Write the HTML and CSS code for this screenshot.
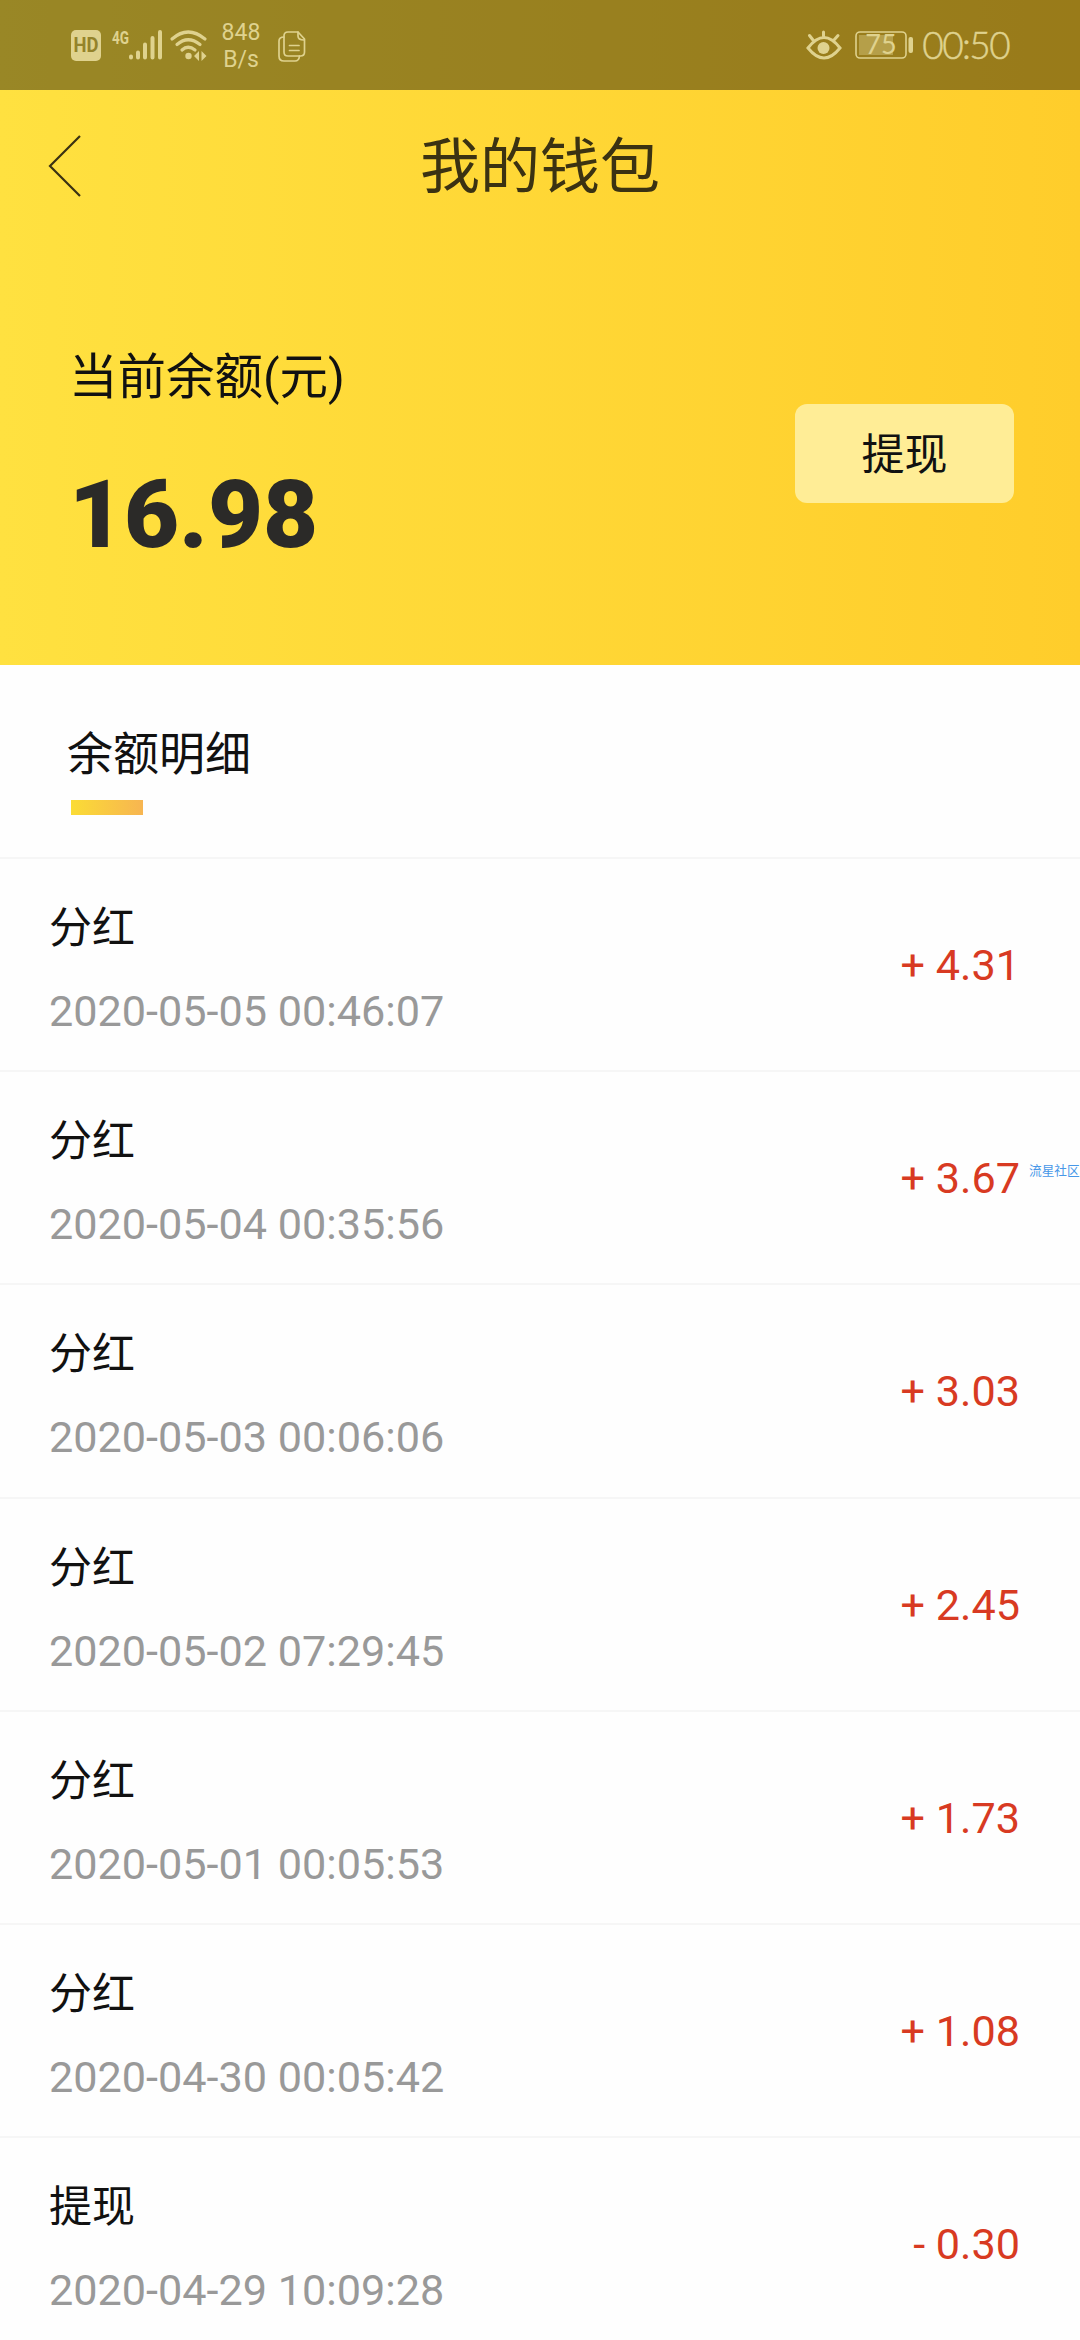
FILE: index.html
```
<!DOCTYPE html>
<html lang="zh-CN">
<head>
<meta charset="utf-8">
<title>我的钱包</title>
<link rel="stylesheet" href="styles.css">
</head>
<body>
<div class="screen">
  <header class="hero">
    <div class="status">
      <svg class="hd" width="30" height="31" viewBox="0 0 30 31"><rect width="30" height="31" rx="5" fill="currentColor"/><text x="15" y="22" text-anchor="middle" class="hd-text" textLength="25" lengthAdjust="spacingAndGlyphs">HD</text></svg>
      <svg class="signal" width="51" height="32" viewBox="0 0 51 32" fill="none" stroke="currentColor" stroke-width="4" stroke-linecap="round"><text x="0" y="14.500" class="net-text" textLength="17" lengthAdjust="spacingAndGlyphs">4G</text><path d="M19 27.500v1M26 23.500v5M33 15.500v13M40.500 9v19.500M48 3v25.500"/></svg>
      <svg class="wifi" width="38" height="32" viewBox="0 0 38 32" fill="none" stroke="currentColor" stroke-width="3.200" stroke-linecap="round"><path d="M2 10Q18-4 35 10M7 15.500Q18 6 30 15.500M12 21Q18 15.500 25 21"/><circle cx="18.500" cy="27" r="3.200" fill="currentColor" stroke="none"/><path d="M29 22v10l-5-5zM31.500 22v10l5-5z" fill="currentColor" stroke="none"/></svg>
      <div class="speed"><span>848</span><span>B/s</span></div>
      <svg class="docs" width="28" height="31" viewBox="0 0 28 31" fill="none" stroke="currentColor" stroke-width="1.700" stroke-linejoin="round" stroke-linecap="round"><path d="M10 1h10l6.500 7v13q0 4-4 4H10q-4 0-4-4V5q0-4 4-4z"/><path d="M20 1v4q0 4 6 4M6 6Q1 6 1 10v15q0 5 5 5h11q4 0 4.500-5M11.500 14.500H21M11.500 19.500H21"/></svg>
      <div class="status-right">
        <svg width="36" height="30" viewBox="0 0 36 30" fill="none" stroke="currentColor" stroke-width="3" stroke-linecap="round"><path d="M2 18Q18-3 34 18Q18 38 2 18zM17.500 6V2M7 10L3.500 5.500M28 10l4-4.500"/><circle cx="17.500" cy="18" r="6" fill="currentColor" stroke="none"/></svg>
        <svg class="battery" width="58" height="28" viewBox="0 0 58 28"><rect x="1" y="1" width="50" height="26" rx="4" fill="none" stroke="currentColor" stroke-width="1.600"/><rect x="4" y="4" width="34" height="20" fill="currentColor" opacity=".4"/><rect x="53.500" y="6" width="4.500" height="16" rx="2" fill="currentColor"/><text x="26" y="23" text-anchor="middle" class="bat-text">75</text></svg>
        <span class="time">00:50</span>
      </div>
    </div>
    <div class="nav">
      <svg class="back" width="33" height="62" viewBox="0 0 33 62" fill="none" stroke="currentColor" stroke-width="2.200"><path d="M32 1L2 31l30 30"/></svg>
      <h1 class="title">我的钱包</h1>
    </div>
    <div class="balance">
      <div>
        <div class="label">当前余额(元)</div>
        <div class="amount">16.98</div>
      </div>
      <button class="withdraw">提现</button>
    </div>
  </header>
  <div class="tab"><span class="tab-text">余额明细</span><i class="tab-line"></i></div>
  <main class="list">
    <div class="row"><div><div class="name">分红</div><div class="date">2020-05-05 00:46:07</div></div><div class="value">+ 4.31</div></div>
    <div class="row"><div><div class="name">分红</div><div class="date">2020-05-04 00:35:56</div></div><div class="value">+ 3.67</div><span class="mark">流星社区</span></div>
    <div class="row"><div><div class="name">分红</div><div class="date">2020-05-03 00:06:06</div></div><div class="value">+ 3.03</div></div>
    <div class="row"><div><div class="name">分红</div><div class="date">2020-05-02 07:29:45</div></div><div class="value">+ 2.45</div></div>
    <div class="row"><div><div class="name">分红</div><div class="date">2020-05-01 00:05:53</div></div><div class="value">+ 1.73</div></div>
    <div class="row"><div><div class="name">分红</div><div class="date">2020-04-30 00:05:42</div></div><div class="value">+ 1.08</div></div>
    <div class="row"><div><div class="name">提现</div><div class="date">2020-04-29 10:09:28</div></div><div class="value">- 0.30</div></div>
  </main>
</div>
</body>
</html>
```
FILE: styles.css
```
* { box-sizing: border-box; }
body { margin: 0; background: #fefefe; font-family: Roboto, "Noto Sans CJK SC", sans-serif; }
svg { overflow: visible; }
.screen { width: 1080px; height: 2340px; overflow: hidden; }
.hero { height: 665px; background: linear-gradient(90deg, #ffe140, #ffcd2b); }
.status { height: 90px; padding: 0 71px; display: flex; align-items: center; background: rgba(0, 0, 0, .4); color: #dfd28e; }
.hd-text { font: 700 20px Roboto, sans-serif; fill: #94832a; }
.net-text { font: 700 19px Roboto, sans-serif; fill: currentColor; stroke: none; }
.signal { margin-left: 11px; }
.wifi { margin-left: 7px; }
.speed { margin-left: 13px; padding-top: 2px; width: 40px; text-align: center; font-size: 23px; line-height: 27px; display: flex; flex-direction: column; }
.docs { margin-left: 17px; margin-top: 2px; }
.status-right { margin-left: auto; display: flex; align-items: center; }
.battery { margin-left: 13px; }
.bat-text { font: 27px Lato, sans-serif; fill: currentColor; }
.time { margin-left: 9px; font: 300 37px/40px Lato, sans-serif; letter-spacing: -1.6px; -webkit-text-stroke: .5px currentColor; }
.nav { height: 152px; padding-left: 48px; display: flex; align-items: center; color: #3b3212; }
.title { flex: 1; margin: 3px 81px 0 0; text-align: center; font-size: 60px; line-height: 80px; font-weight: 400; }
.balance { padding: 101px 66px 0 69px; display: flex; justify-content: space-between; align-items: flex-start; }
.label { font-size: 48.5px; line-height: 70px; color: #111; }
.amount { margin-top: 47px; font-size: 95px; line-height: 110px; font-weight: 900; color: #2b2a28; }
.withdraw { margin-top: 61px; width: 219px; height: 99px; border: 0; border-radius: 12px; background: #ffed96; font: 43px/90px "Noto Sans CJK SC", sans-serif; padding: 0 0 6px; color: #111; }
.tab { height: 194px; padding: 55px 0 0 67px; border-bottom: 2px solid #f6f6f6; display: flex; flex-direction: column; align-items: flex-start; }
.tab-text { font-size: 46px; line-height: 68px; color: #111; }
.tab-line { margin: 12px 0 0 4px; width: 72px; height: 15px; background: linear-gradient(90deg, #fbdc35, #f7b551); }
.row { position: relative; height: 213.2px; padding: 37px 60px 0 49px; display: flex; justify-content: space-between; border-bottom: 2px solid #f6f6f6; }
.name { font-size: 43px; line-height: 64px; color: #111; }
.date { margin-top: 27px; font-size: 43.2px; line-height: 50px; color: #999; }
.value { margin-top: 45px; font-size: 43.2px; line-height: 50px; color: #d83a22; }
.mark { position: absolute; left: 1029px; top: 89px; font-size: 12.7px; line-height: 20px; color: #4797e8; white-space: nowrap; }
```
